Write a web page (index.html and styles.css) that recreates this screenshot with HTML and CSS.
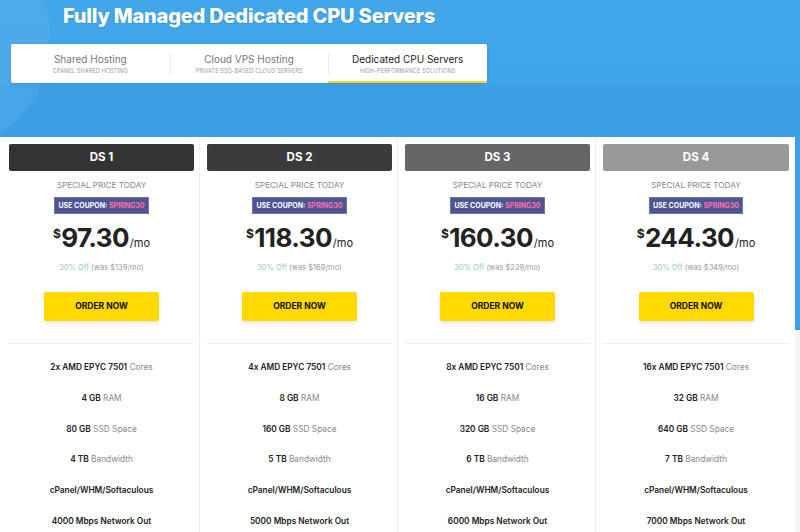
FILE: index.html
```html
<!DOCTYPE html>
<html lang="en">
  <head>
    <meta charset="UTF-8" />
    <meta name="viewport" content="width=device-width, initial-scale=1.0" />
    <title>Dedicated CPU Servers</title>
    <link rel="stylesheet" href="styles.css">
  </head>

  <body>
    <div class="hero">
      <div class="hero-inner">
        <h1>Fully Managed Dedicated CPU Servers</h1>
        <ul class="tabs">
          <li>
            <span class="tab-title">Shared Hosting</span>
            <span class="tab-sub">cPanel Shared Hosting</span>
          </li>
          <li>
            <span class="tab-title">Cloud VPS Hosting</span>
            <span class="tab-sub">Private SSD-Based Cloud Servers</span>
          </li>
          <li class="active">
            <span class="tab-title">Dedicated CPU Servers</span>
            <span class="tab-sub">High-Performance Solutions</span>
          </li>
        </ul>
      </div>
    </div>

    <div class="plans">
      <div class="plan">
        <div class="plan-name ds1">DS 1</div>
        <p class="special">Special Price Today</p>
        <div class="coupon">USE COUPON: <span>SPRING30</span></div>
        <div class="price"><sup>$</sup>97.30<small>/mo</small></div>
        <p class="off"><span>30% Off</span> (was $139/mo)</p>
        <a class="order" href="#">ORDER NOW</a>
        <ul class="features">
          <li><b>2x AMD EPYC 7501</b> Cores</li>
          <li><b>4 GB</b> RAM</li>
          <li><b>80 GB</b> SSD Space</li>
          <li><b>4 TB</b> Bandwidth</li>
          <li><b>cPanel/WHM/Softaculous</b></li>
          <li><b>4000 Mbps Network Out</b></li>
        </ul>
      </div>
      <div class="plan">
        <div class="plan-name ds2">DS 2</div>
        <p class="special">Special Price Today</p>
        <div class="coupon">USE COUPON: <span>SPRING30</span></div>
        <div class="price"><sup>$</sup>118.30<small>/mo</small></div>
        <p class="off"><span>30% Off</span> (was $169/mo)</p>
        <a class="order" href="#">ORDER NOW</a>
        <ul class="features">
          <li><b>4x AMD EPYC 7501</b> Cores</li>
          <li><b>8 GB</b> RAM</li>
          <li><b>160 GB</b> SSD Space</li>
          <li><b>5 TB</b> Bandwidth</li>
          <li><b>cPanel/WHM/Softaculous</b></li>
          <li><b>5000 Mbps Network Out</b></li>
        </ul>
      </div>
      <div class="plan">
        <div class="plan-name ds3">DS 3</div>
        <p class="special">Special Price Today</p>
        <div class="coupon">USE COUPON: <span>SPRING30</span></div>
        <div class="price"><sup>$</sup>160.30<small>/mo</small></div>
        <p class="off"><span>30% Off</span> (was $229/mo)</p>
        <a class="order" href="#">ORDER NOW</a>
        <ul class="features">
          <li><b>8x AMD EPYC 7501</b> Cores</li>
          <li><b>16 GB</b> RAM</li>
          <li><b>320 GB</b> SSD Space</li>
          <li><b>6 TB</b> Bandwidth</li>
          <li><b>cPanel/WHM/Softaculous</b></li>
          <li><b>6000 Mbps Network Out</b></li>
        </ul>
      </div>
      <div class="plan">
        <div class="plan-name ds4">DS 4</div>
        <p class="special">Special Price Today</p>
        <div class="coupon">USE COUPON: <span>SPRING30</span></div>
        <div class="price"><sup>$</sup>244.30<small>/mo</small></div>
        <p class="off"><span>30% Off</span> (was $349/mo)</p>
        <a class="order" href="#">ORDER NOW</a>
        <ul class="features">
          <li><b>16x AMD EPYC 7501</b> Cores</li>
          <li><b>32 GB</b> RAM</li>
          <li><b>640 GB</b> SSD Space</li>
          <li><b>7 TB</b> Bandwidth</li>
          <li><b>cPanel/WHM/Softaculous</b></li>
          <li><b>7000 Mbps Network Out</b></li>
        </ul>
      </div>
    </div>
  </body>
</html>
```

FILE: styles.css
```css
* {
  padding: 0;
  margin: 0;
  box-sizing: border-box;
}

html,
body {
  width: 100%;
  height: 100%;
  overflow: hidden;
}

body {
  font-family: Inter, "Liberation Sans", sans-serif;
  background: linear-gradient(#3d9fe6 0, #3d9fe6 330px, #f4f5f7 330px);
  color: #222;
}

.hero {
  height: 137px;
  background:
    radial-gradient(circle at -60px 40px, rgba(255, 255, 255, 0.06) 0 110px, transparent 111px),
    linear-gradient(#42a6ea 0, #40a4e9 85px, #3d9fe6 85px);
}

.hero-inner {
  width: 476px;
  margin-left: 11px;
}

.hero h1 {
  height: 44px;
  padding-top: 4px;
  text-align: center;
  color: #fff;
  font-size: 20px;
  font-weight: 800;
  letter-spacing: -0.2px;
  text-shadow: 0 1px 2px rgba(0, 0, 0, 0.12);
}

.tabs {
  display: flex;
  height: 39px;
  list-style: none;
  background: #fff;
  border-radius: 2px;
  box-shadow: 0 1px 3px rgba(0, 0, 0, 0.12);
}

.tabs li {
  flex: 1;
  display: flex;
  flex-direction: column;
  align-items: center;
  padding-top: 8px;
  position: relative;
}

.tabs li + li::before {
  content: "";
  position: absolute;
  left: 0;
  top: 9px;
  height: 22px;
  border-left: 1px solid #eee;
}

.tabs li.active {
  border-bottom: 2px solid #f5d80f;
}

.tab-title {
  font-size: 10px;
  color: #777;
  line-height: 14px;
}

.tabs li.active .tab-title {
  color: #222;
}

.tab-sub {
  margin-top: 2px;
  font-size: 5.6px;
  text-transform: uppercase;
  color: #999;
  letter-spacing: 0.1px;
}

.plans {
  display: flex;
  width: 795px;
  background: #fff;
  height: 395px;
  padding-left: 2px;
}

.plan {
  width: 198px;
  padding: 7px 5px 0 7px;
  border-right: 1px solid #eee;
  text-align: center;
}

.plan:last-child {
  border-right: none;
}

.plan-name {
  height: 27px;
  line-height: 27px;
  border-radius: 2px;
  color: #fff;
  font-size: 11.5px;
  font-weight: 700;
}

.ds1 {
  background-color: #333;
}

.ds2 {
  background-color: #3b3b3b;
}

.ds3 {
  background-color: #666;
}

.ds4 {
  background-color: #999;
}

.special {
  margin-top: 9px;
  font-size: 8.2px;
  line-height: 11px;
  color: #888;
  text-transform: uppercase;
}

.coupon {
  display: inline-block;
  margin-top: 6px;
  height: 17px;
  line-height: 15px;
  padding: 0 3px;
  background: #4e5592;
  border: 1px solid #6f75a8;
  color: #fff;
  font-size: 7px;
  font-weight: 700;
}

.coupon span {
  color: #ff6fa8;
}

.price {
  margin-top: 3px;
  height: 34px;
  font-size: 26px;
  line-height: 34px;
  font-weight: 700;
  letter-spacing: -0.6px;
  color: #222;
}

.price sup {
  font-size: 12px;
  vertical-align: 9px;
  margin-right: 1px;
}

.price small {
  font-size: 11px;
  font-weight: 400;
  letter-spacing: 0;
  margin-left: 1px;
}

.off {
  margin-top: 11px;
  font-size: 7.5px;
  line-height: 11px;
  color: #999;
}

.off span {
  color: #8fd1ad;
}

.order {
  display: block;
  width: 115px;
  height: 29px;
  line-height: 29px;
  margin: 19px auto 0;
  background: #ffd900;
  border-radius: 2px;
  box-shadow: 0 2px 4px rgba(0, 0, 0, 0.12);
  color: #111;
  font-size: 8.5px;
  font-weight: 700;
  text-decoration: none;
}

.features {
  margin-top: 22px;
  padding-top: 15px;
  border-top: 1px solid #eee;
  list-style: none;
}

.features li {
  height: 30.8px;
  line-height: 16px;
  font-size: 8.3px;
  color: #888;
}

.features b {
  font-weight: 600;
  color: #222;
}
```
